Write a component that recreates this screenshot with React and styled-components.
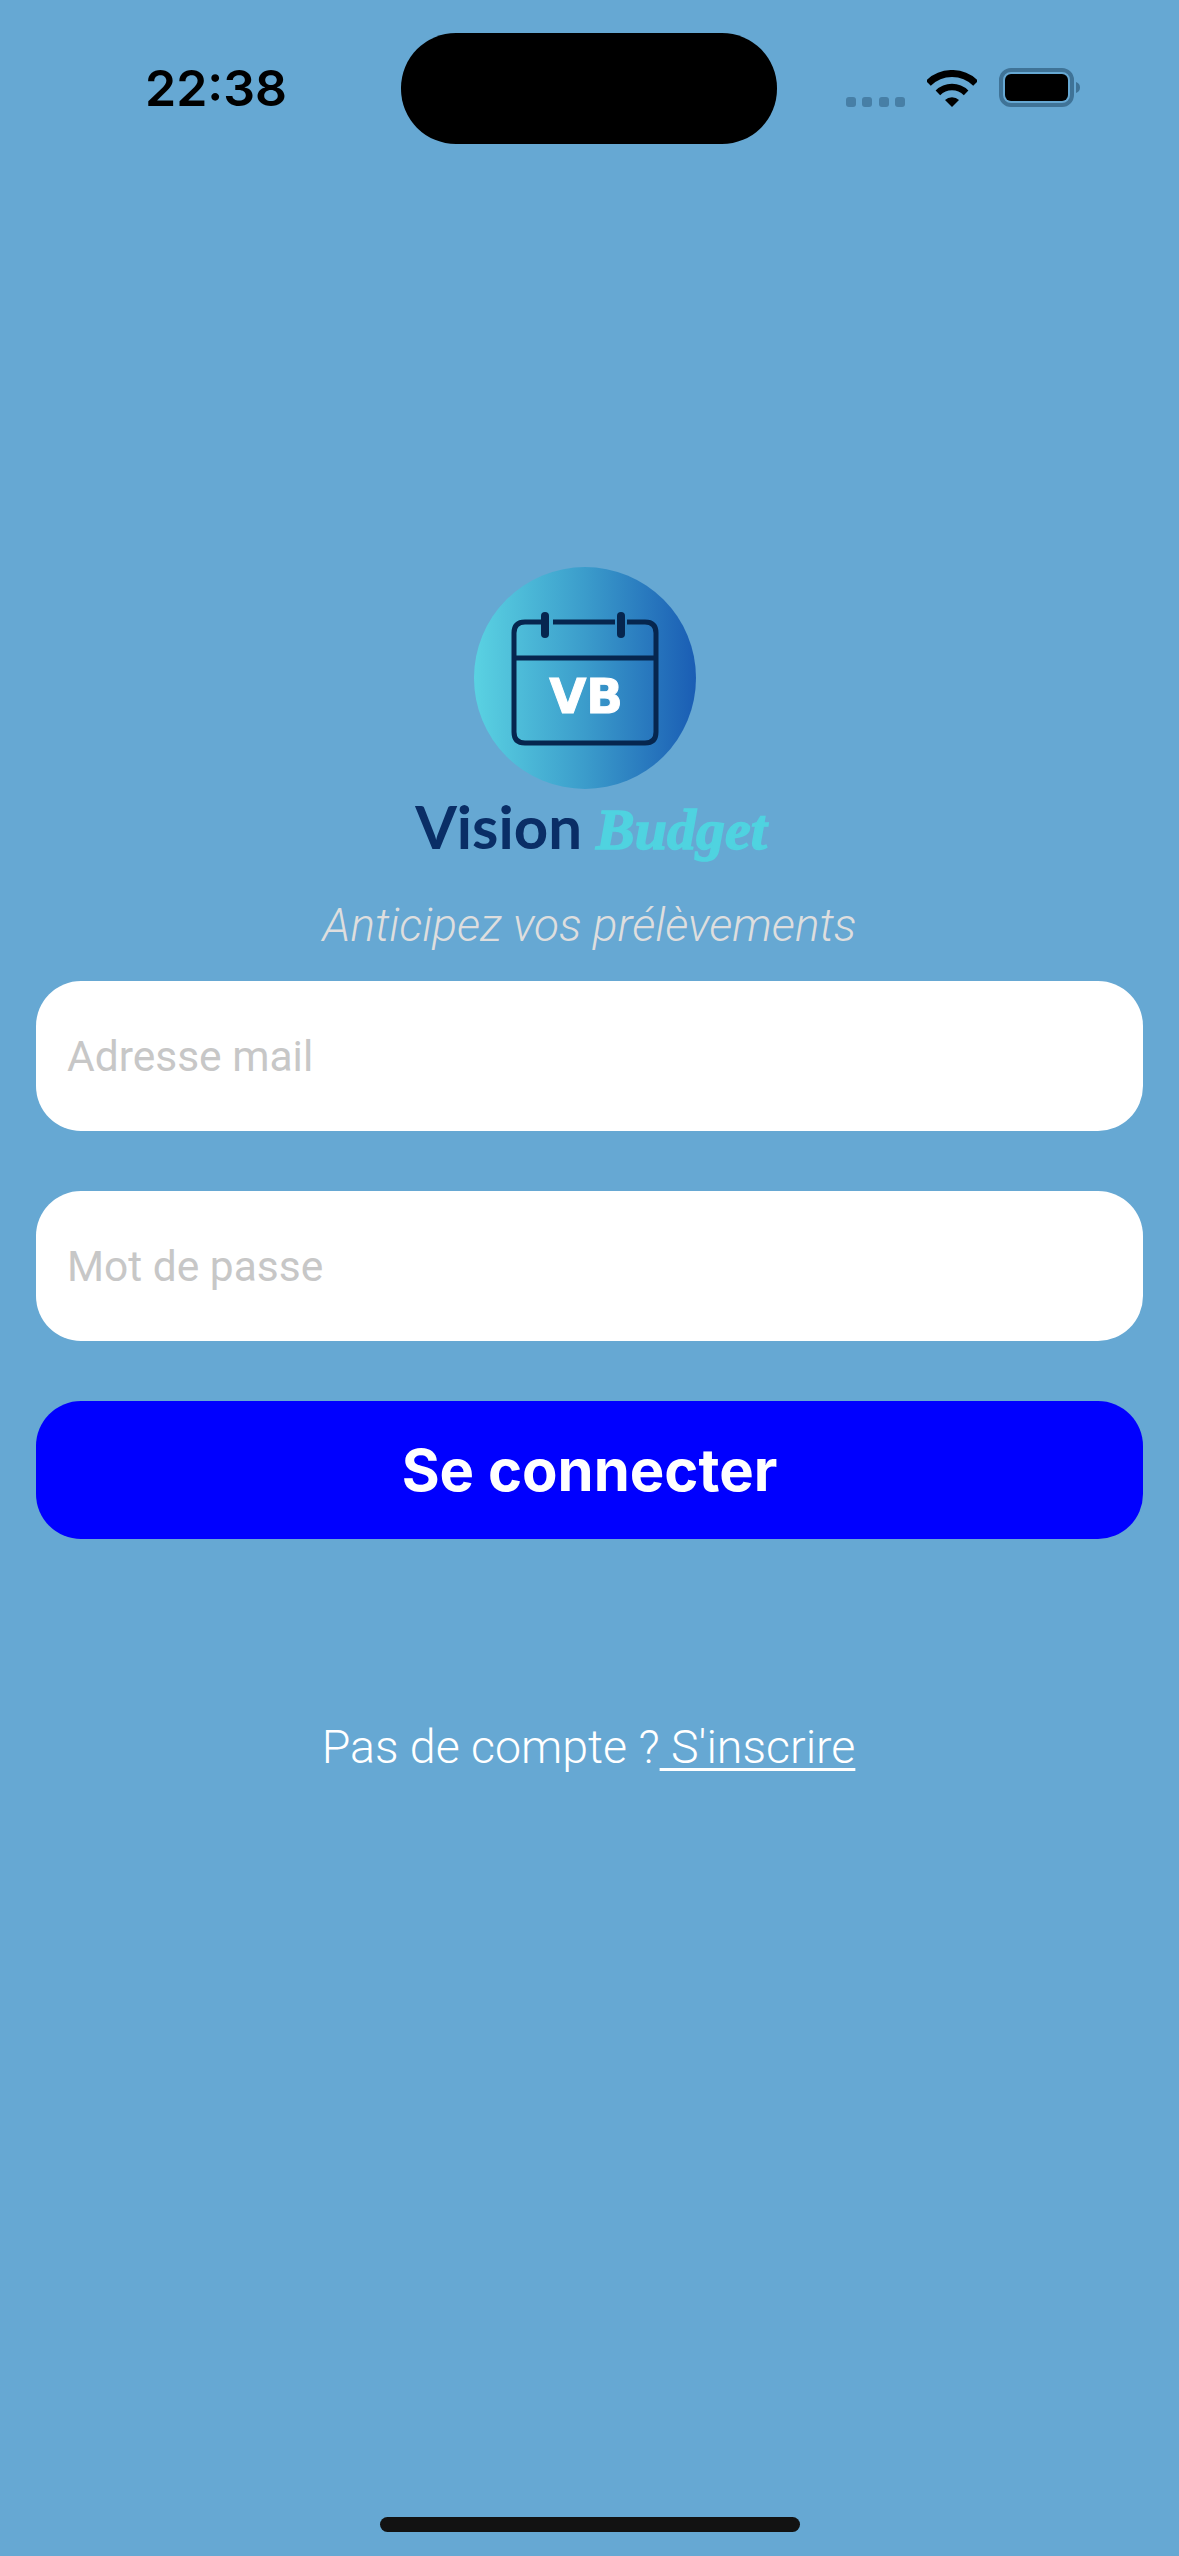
import styled, { createGlobalStyle } from 'styled-components'

const GlobalStyle = createGlobalStyle`
  html, body {
    margin: 0;
    padding: 0;
    background: #66a8d3;
  }
  * {
    box-sizing: border-box;
  }
`

const App = () => {
  return (
    <Screen>
      <GlobalStyle />
      <StatusBar>
        <Time>22:38</Time>
        <Island />
        <StatusIcons>
          <SignalDots>
            <Dot />
            <Dot />
            <Dot />
            <Dot />
          </SignalDots>
          <WifiIcon />
          <BatteryIcon />
        </StatusIcons>
      </StatusBar>

      <Main>
        <Logo>
          <LogoBadge />
          <Wordmark>
            <Vision>Vision</Vision>
            <Budget>Budget</Budget>
          </Wordmark>
        </Logo>
        <Tagline>Anticipez vos prélèvements</Tagline>

        <Form>
          <Field placeholder="Adresse mail" />
          <Field placeholder="Mot de passe" type="password" />
          <Submit type="button">Se connecter</Submit>
        </Form>

        <SignUp>
          Pas de compte ?<SignUpLink> S'inscrire</SignUpLink>
        </SignUp>
      </Main>

      <HomeIndicator />
    </Screen>
  )
}

const WifiIcon = () => (
  <WifiSvg viewBox="0 0 50 37">
    <path d="M1.3 13.3 A33.5 33.5 0 0 1 48.7 13.3" fill="none" stroke="#000" strokeWidth="7" />
    <path d="M10.9 22.9 A20 20 0 0 1 39.1 22.9" fill="none" stroke="#000" strokeWidth="6.5" />
    <path d="M25 37 L18 30 A10 10 0 0 1 32 30 Z" fill="#000" />
  </WifiSvg>
)

const BatteryIcon = () => (
  <BatterySvg viewBox="0 0 82 39">
    <rect x="2" y="2" width="71" height="35" rx="10" fill="none" stroke="#3f7397" strokeWidth="4" />
    <rect x="6" y="6" width="63" height="27" rx="6" fill="#000" />
    <path d="M77 14 C80 15 81 17 81 19.5 C81 22 80 24 77 25 Z" fill="#3f7397" />
  </BatterySvg>
)

const LogoBadge = () => (
  <BadgeSvg viewBox="0 0 222 222">
    <defs>
      <linearGradient id="badgeFill" x1="0" y1="0" x2="1" y2="0">
        <stop offset="0" stopColor="#5ad2e2" />
        <stop offset="0.5" stopColor="#3b9ccb" />
        <stop offset="1" stopColor="#1a5db4" />
      </linearGradient>
    </defs>
    <circle cx="111" cy="111" r="111" fill="url(#badgeFill)" />
    <g fill="none" stroke="#06264f" strokeWidth="5">
      <path d="M67 55 H51 Q40 55 40 66 V165 Q40 176 51 176 H171 Q182 176 182 165 V66 Q182 55 171 55 H153" />
      <path d="M79 55 H141" />
      <path d="M40 91 H182" />
    </g>
    <g fill="none" stroke="#06264f" strokeWidth="8" strokeLinecap="round">
      <path d="M71 49 V67" />
      <path d="M147 49 V67" />
    </g>
    <BadgeText x="112" y="146" textAnchor="middle">VB</BadgeText>
  </BadgeSvg>
)

const Screen = styled.div`
  position: relative;
  width: 1179px;
  height: 2556px;
  overflow: hidden;
  background: #66a8d3;
  font-family: Roboto, "Liberation Sans", sans-serif;
`

const StatusBar = styled.div`
  display: flex;
  align-items: flex-start;
  height: 144px;
  padding: 33px 99px 0 145px;
`

const Time = styled.div`
  width: 256px;
  padding-top: 25px;
  font-family: Inter, sans-serif;
  font-size: 50px;
  line-height: 60px;
  font-weight: 600;
  color: #000;
`

const Island = styled.div`
  flex: none;
  width: 376px;
  height: 111px;
  border-radius: 55px;
  background: #000;
`

const StatusIcons = styled.div`
  flex: 1;
  display: flex;
  align-items: flex-end;
  justify-content: flex-end;
  height: 74px;
`

const SignalDots = styled.div`
  display: flex;
  gap: 6.3px;
  margin-right: 22px;
`

const Dot = styled.span`
  width: 10px;
  height: 10px;
  border-radius: 3px;
  background: #477fa6;
`

const WifiSvg = styled.svg`
  display: block;
  width: 50px;
  height: 37px;
  margin-right: 22px;
`

const BatterySvg = styled.svg`
  display: block;
  width: 82px;
  height: 39px;
  margin-right: -1px;
`

const Main = styled.main`
  display: flex;
  flex-direction: column;
  align-items: center;
  padding: 423px 36px 0;
`

const Logo = styled.div`
  display: flex;
  flex-direction: column;
  align-items: center;
  filter: blur(0.7px);
`

const BadgeSvg = styled.svg`
  display: block;
  width: 222px;
  height: 222px;
  margin-left: -10px;
`

const BadgeText = styled.text`
  font-family: "DejaVu Sans", sans-serif;
  font-size: 48px;
  font-weight: 700;
  fill: #fff;
  stroke: #fff;
  stroke-width: 1px;
`

const Wordmark = styled.div`
  display: flex;
  align-items: baseline;
  gap: 14px;
  margin-top: 2px;
  margin-left: 3px;
  height: 80px;
`

const Vision = styled.span`
  font-family: Lato, sans-serif;
  font-size: 60px;
  line-height: 70px;
  font-weight: 700;
  color: #0a2e66;
`

const Budget = styled.span`
  font-family: "Liberation Serif", serif;
  font-size: 58px;
  line-height: 70px;
  font-weight: 700;
  font-style: italic;
  color: #4fd3e0;
  -webkit-text-stroke: 1.5px #4fd3e0;
`

const Tagline = styled.div`
  margin-top: 29px;
  font-size: 46px;
  line-height: 50px;
  font-weight: 300;
  font-style: italic;
  color: #dedede;
`

const Form = styled.form`
  display: flex;
  flex-direction: column;
  gap: 60px;
  width: 100%;
  margin-top: 31px;
`

const Field = styled.input`
  display: block;
  width: 100%;
  height: 150px;
  padding: 0 31px;
  border: 0;
  border-radius: 45px;
  background: #fff;
  font-family: Roboto, sans-serif;
  font-size: 42.5px;
  font-weight: 400;
  outline: none;

  &::placeholder {
    color: #c7c7c7;
    opacity: 1;
  }
`

const Submit = styled.button`
  display: block;
  width: 100%;
  height: 138px;
  border: 0;
  border-radius: 45px;
  background: #0000ff;
  font-family: Inter, sans-serif;
  font-size: 58px;
  font-weight: 700;
  color: #fff;
`

const SignUp = styled.div`
  margin-top: 181px;
  margin-left: -2px;
  font-size: 46.5px;
  line-height: 54px;
  font-weight: 300;
  color: #fff;
  white-space: pre;
`

const SignUpLink = styled.span`
  text-decoration: underline;
  text-decoration-thickness: 3px;
  text-underline-offset: 5px;
`

const HomeIndicator = styled.div`
  position: absolute;
  left: 380px;
  bottom: 24px;
  width: 420px;
  height: 15px;
  border-radius: 8px;
  background: #121212;
`

export default App
